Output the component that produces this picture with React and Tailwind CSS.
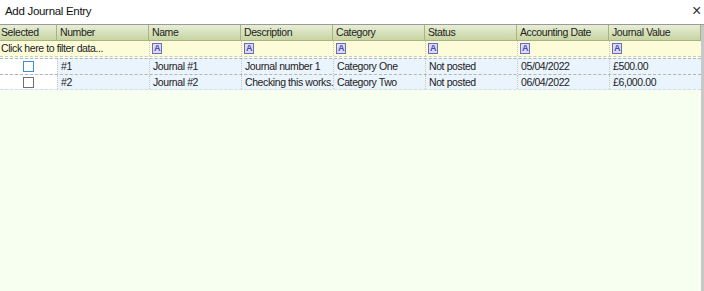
const columns = [
  "Number",
  "Name",
  "Description",
  "Category",
  "Status",
  "Accounting Date",
  "Journal Value",
];

const rows = [
  {
    active: true,
    values: ["#1", "Journal #1", "Journal number 1", "Category One", "Not posted", "05/04/2022", "£500.00"],
  },
  {
    active: false,
    values: ["#2", "Journal #2", "Checking this works.", "Category Two", "Not posted", "06/04/2022", "£6,000.00"],
  },
];

function FilterIcon() {
  return (
    <span className="inline-flex h-[11px] w-[10px] items-end justify-center border border-[#6b6bc4] bg-[#dcdcf6] text-[9px] leading-[9px] font-bold text-[#4a4ab0]">
      A
    </span>
  );
}

export default function App() {
  return (
    <div
      className="relative h-[291px] w-[704px] overflow-hidden bg-white text-[10.5px] tracking-[-0.4px] text-[#222]"
      style={{ fontFamily: '"Liberation Sans", Arial, sans-serif' }}
    >
      {/* Title bar */}
      <div className="flex h-[24px] items-center justify-between pl-[5px] pr-[3px]">
        <span className="text-[11.5px] tracking-[-0.3px] text-[#111]">Add Journal Entry</span>
        <span className="-mt-[2px] text-[16px] leading-none text-[#333]">×</span>
      </div>

      <div className="flex h-[267px] border-t border-[#9a9a9a]">
        <div className="flex flex-1 flex-col bg-[#f7fff0]">
          {/* Header */}
          <div className="flex h-[16px] border-b border-[#a7b482] bg-gradient-to-b from-[#e8eed6] to-[#c7d4a2]">
            <div className="w-[57px] border-r border-[#a7b482] pl-[1px] leading-[15px]">Selected</div>
            {columns.map((c) => (
              <div key={c} className="w-[92px] border-r border-[#a7b482] pl-[3px] leading-[15px]">
                {c}
              </div>
            ))}
          </div>

          {/* Filter row */}
          <div className="flex h-[16px] border-b border-dashed border-[#c9c9c9] bg-[#fdfcd9]">
            <div className="w-[149px] truncate whitespace-nowrap pl-[1px] leading-[15px]">
              Click here to filter data...
            </div>
            {columns.slice(1).map((c) => (
              <div key={c} className="flex w-[92px] items-center border-l border-dotted border-[#c9c9c9] pl-[2px]">
                <FilterIcon />
              </div>
            ))}
          </div>

          <div className="h-[1px]" />

          {/* Rows */}
          {rows.map((r, i) => (
            <div
              key={i}
              className={`flex h-[16px] border-t border-dashed border-[#b5b5b5] bg-[#eaf4fd] ${
                i === rows.length - 1 ? "border-b border-b-[#d3dbe3]" : ""
              }`}
            >
              <div className="flex w-[57px] items-center justify-center bg-white">
                <span
                  className={`block h-[11px] w-[11px] border bg-white ${
                    r.active ? "border-[#3f8fd8]" : "border-[#707070]"
                  }`}
                />
              </div>
              {r.values.map((v, j) => (
                <div
                  key={j}
                  className="w-[92px] whitespace-nowrap border-l border-dotted border-[#c6c6c6] pl-[3px] leading-[15px]"
                >
                  {v}
                </div>
              ))}
            </div>
          ))}
        </div>
        <div className="w-[3px] bg-[#c8c8c8]" />
      </div>
    </div>
  );
}
